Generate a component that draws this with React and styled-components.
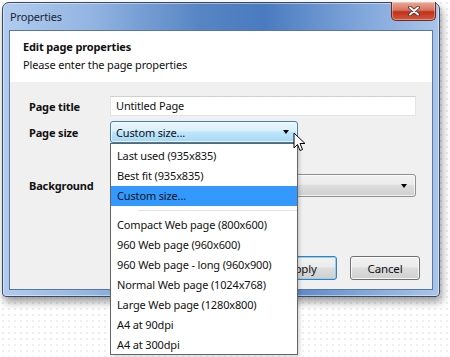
import React from "react";
import styled, { createGlobalStyle } from "styled-components";

const Global = createGlobalStyle`
  html, body { margin: 0; padding: 0; }
  body {
    width: 450px; height: 357px; overflow: hidden;
    font-family: "Noto Sans", "Open Sans", sans-serif;
    letter-spacing: -0.15px;
    background-color: #ffffff;
    background-image: radial-gradient(circle, #e4e4e4 0.6px, transparent 0.9px);
    background-size: 6px 6px;
  }
`;

const Page = styled.div`
  position: relative;
  width: 450px;
  height: 357px;
  padding: 2px 0 0 2px;
  box-sizing: border-box;
`;

const Window = styled.div`
  width: 438px;
  height: 295px;
  box-sizing: border-box;
  border: 1px solid #3c4a60;
  border-radius: 7px 7px 4px 4px;
  background: linear-gradient(90deg, #b0cbee 0%, #93b5e2 20%, #5785c4 45%, #4a7bc0 60%, #7ba2d8 80%, #a9c5eb 100%);
  box-shadow: 2px 5px 9px rgba(0,0,0,0.4), inset 0 0 0 1px rgba(255,255,255,0.45);
  display: flex;
  flex-direction: column;
  padding: 0 6px 6px 6px;
`;

const TitleBar = styled.div`
  height: 27px;
  display: flex;
  align-items: center;
  justify-content: space-between;
`;

const Title = styled.span`
  font-size: 11px;
  color: #1b2433;
  padding-left: 1px;
`;

const CloseBtn = styled.div`
  align-self: flex-start;
  margin-top: -1px;
  margin-right: -3px;
  width: 45px;
  height: 19px;
  box-sizing: border-box;
  border: 1px solid #6b2a22;
  border-top: none;
  border-radius: 0 0 5px 5px;
  background: linear-gradient(180deg, #eaa897 0%, #d6765f 45%, #c2311a 55%, #d4573c 100%);
  box-shadow: inset 0 0 0 1px rgba(255,255,255,0.35);
  display: flex;
  align-items: center;
  justify-content: center;
`;

const Client = styled.div`
  flex: 1;
  display: flex;
  flex-direction: column;
  border: 1px solid #5a77a3;
  background: #f0f0f0;
`;

const Header = styled.div`
  height: 51px;
  background: #ffffff;
  padding: 7px 0 0 13px;
  box-sizing: border-box;
  color: #111;
  font-size: 11px;
  line-height: 18px;
`;

const HeaderTitle = styled.div`
  font-weight: bold;
`;

const Body = styled.div`
  flex: 1;
  display: flex;
  flex-direction: column;
  padding: 14px 16px 0 19px;
`;

const Row = styled.div`
  display: flex;
  align-items: center;
  height: ${(p) => p.$h}px;
  margin-top: ${(p) => p.$mt || 0}px;
`;

const Label = styled.div`
  width: 81px;
  font-size: 11px;
  font-weight: bold;
  color: #111;
`;

const TextInput = styled.div`
  flex: 1;
  height: 20px;
  box-sizing: border-box;
  border: 1px solid #e2e3ea;
  border-top-color: #cfd0d6;
  background: #fff;
  font-size: 11px;
  line-height: 18px;
  padding-left: 5px;
  color: #111;
`;

const Combo = styled.div`
  width: ${(p) => (p.$w ? `${p.$w}px` : "auto")};
  flex: ${(p) => (p.$w ? "none" : 1)};
  height: ${(p) => p.$h}px;
  box-sizing: border-box;
  border: 1px solid ${(p) => (p.$hot ? "#3c7fb1" : "#8e8f8f")};
  border-radius: 3px;
  background: ${(p) =>
    p.$hot
      ? "linear-gradient(180deg, #eaf6fd 0%, #d9f0fc 45%, #bee6fd 50%, #a7d9f5 100%)"
      : "linear-gradient(180deg, #f2f2f2 0%, #ebebeb 45%, #dddddd 50%, #cfcfcf 100%)"};
  box-shadow: inset 0 0 0 1px rgba(255,255,255,0.7);
  display: flex;
  align-items: center;
  justify-content: space-between;
  padding: 0 8px 0 5px;
  font-size: 11px;
  color: #111;
`;

const Arrow = styled.span`
  width: 0;
  height: 0;
  border-left: 3.5px solid transparent;
  border-right: 3.5px solid transparent;
  border-top: 4px solid #000;
`;

const Buttons = styled.div`
  margin-top: auto;
  margin-bottom: 9px;
  margin-right: -4px;
  display: flex;
  justify-content: flex-end;
  gap: 13px;
`;

const Button = styled.div`
  width: 70px;
  height: 24px;
  box-sizing: border-box;
  border: 1px solid ${(p) => (p.$default ? "#3c7fb1" : "#707070")};
  border-radius: 3px;
  background: linear-gradient(180deg, #f2f2f2 0%, #ebebeb 45%, #dddddd 50%, #cfcfcf 100%);
  box-shadow: inset 0 0 0 1px ${(p) => (p.$default ? "#8fd0f6" : "rgba(255,255,255,0.8)")};
  display: flex;
  align-items: center;
  justify-content: center;
  font-size: 11.5px;
  color: #111;
`;

const DropList = styled.div`
  position: absolute;
  left: 110px;
  top: 143px;
  width: 188px;
  height: 212px;
  box-sizing: border-box;
  border: 1px solid #646464;
  background: #fff;
  padding-top: 2px;
  box-shadow: 2px 2px 3px rgba(0,0,0,0.15);
`;

const Item = styled.div`
  height: 20px;
  line-height: 20px;
  padding-left: 6px;
  font-size: 11px;
  color: #111;
  background: ${(p) => (p.$sel ? "#3399ff" : "transparent")};
  white-space: nowrap;
`;

const Separator = styled.div`
  height: 1px;
  background: #e2e3e3;
  margin: 4px 0 3px 27px;
  border-bottom: 1px solid #fff;
`;

const Cursor = styled.svg`
  position: absolute;
  left: 293px;
  top: 132px;
`;

const items1 = ["Last used (935x835)", "Best fit (935x835)", "Custom size..."];
const items2 = [
  "Compact Web page (800x600)",
  "960 Web page (960x600)",
  "960 Web page - long (960x900)",
  "Normal Web page (1024x768)",
  "Large Web page (1280x800)",
  "A4 at 90dpi",
  "A4 at 300dpi",
];

export default function App() {
  return (
    <Page>
      <Global />
      <Window>
        <TitleBar>
          <Title>Properties</Title>
          <CloseBtn>
            <svg width="12" height="10" viewBox="0 0 12 10">
              <path d="M2 1.5 L10 8.5 M10 1.5 L2 8.5" stroke="#4a2a26" strokeWidth="3.6" strokeLinecap="round" />
              <path d="M2 1.5 L10 8.5 M10 1.5 L2 8.5" stroke="#ffffff" strokeWidth="2" strokeLinecap="round" />
            </svg>
          </CloseBtn>
        </TitleBar>
        <Client>
          <Header>
            <HeaderTitle>Edit page properties</HeaderTitle>
            <div>Please enter the page properties</div>
          </Header>
          <Body>
            <Row $h={20}>
              <Label>Page title</Label>
              <TextInput>Untitled Page</TextInput>
            </Row>
            <Row $h={22} $mt={5}>
              <Label>Page size</Label>
              <Combo $w={188} $h={22} $hot>
                <span>Custom size...</span>
                <Arrow />
              </Combo>
            </Row>
            <Row $h={23} $mt={31}>
              <Label>Background</Label>
              <Combo $h={23}>
                <span />
                <Arrow />
              </Combo>
            </Row>
            <Buttons>
              <Button $default>Apply</Button>
              <Button>Cancel</Button>
            </Buttons>
          </Body>
        </Client>
      </Window>
      <DropList>
        {items1.map((t) => (
          <Item key={t} $sel={t === "Custom size..."}>{t}</Item>
        ))}
        <Separator />
        {items2.map((t) => (
          <Item key={t}>{t}</Item>
        ))}
      </DropList>
      <Cursor width="14" height="22" viewBox="0 0 14 22">
        <path d="M1 1 L1 16 L4.5 12.5 L7 18.5 L9.5 17.5 L7 11.5 L12 11.5 Z" fill="#fff" stroke="#000" strokeWidth="1" strokeLinejoin="round" />
      </Cursor>
    </Page>
  );
}
